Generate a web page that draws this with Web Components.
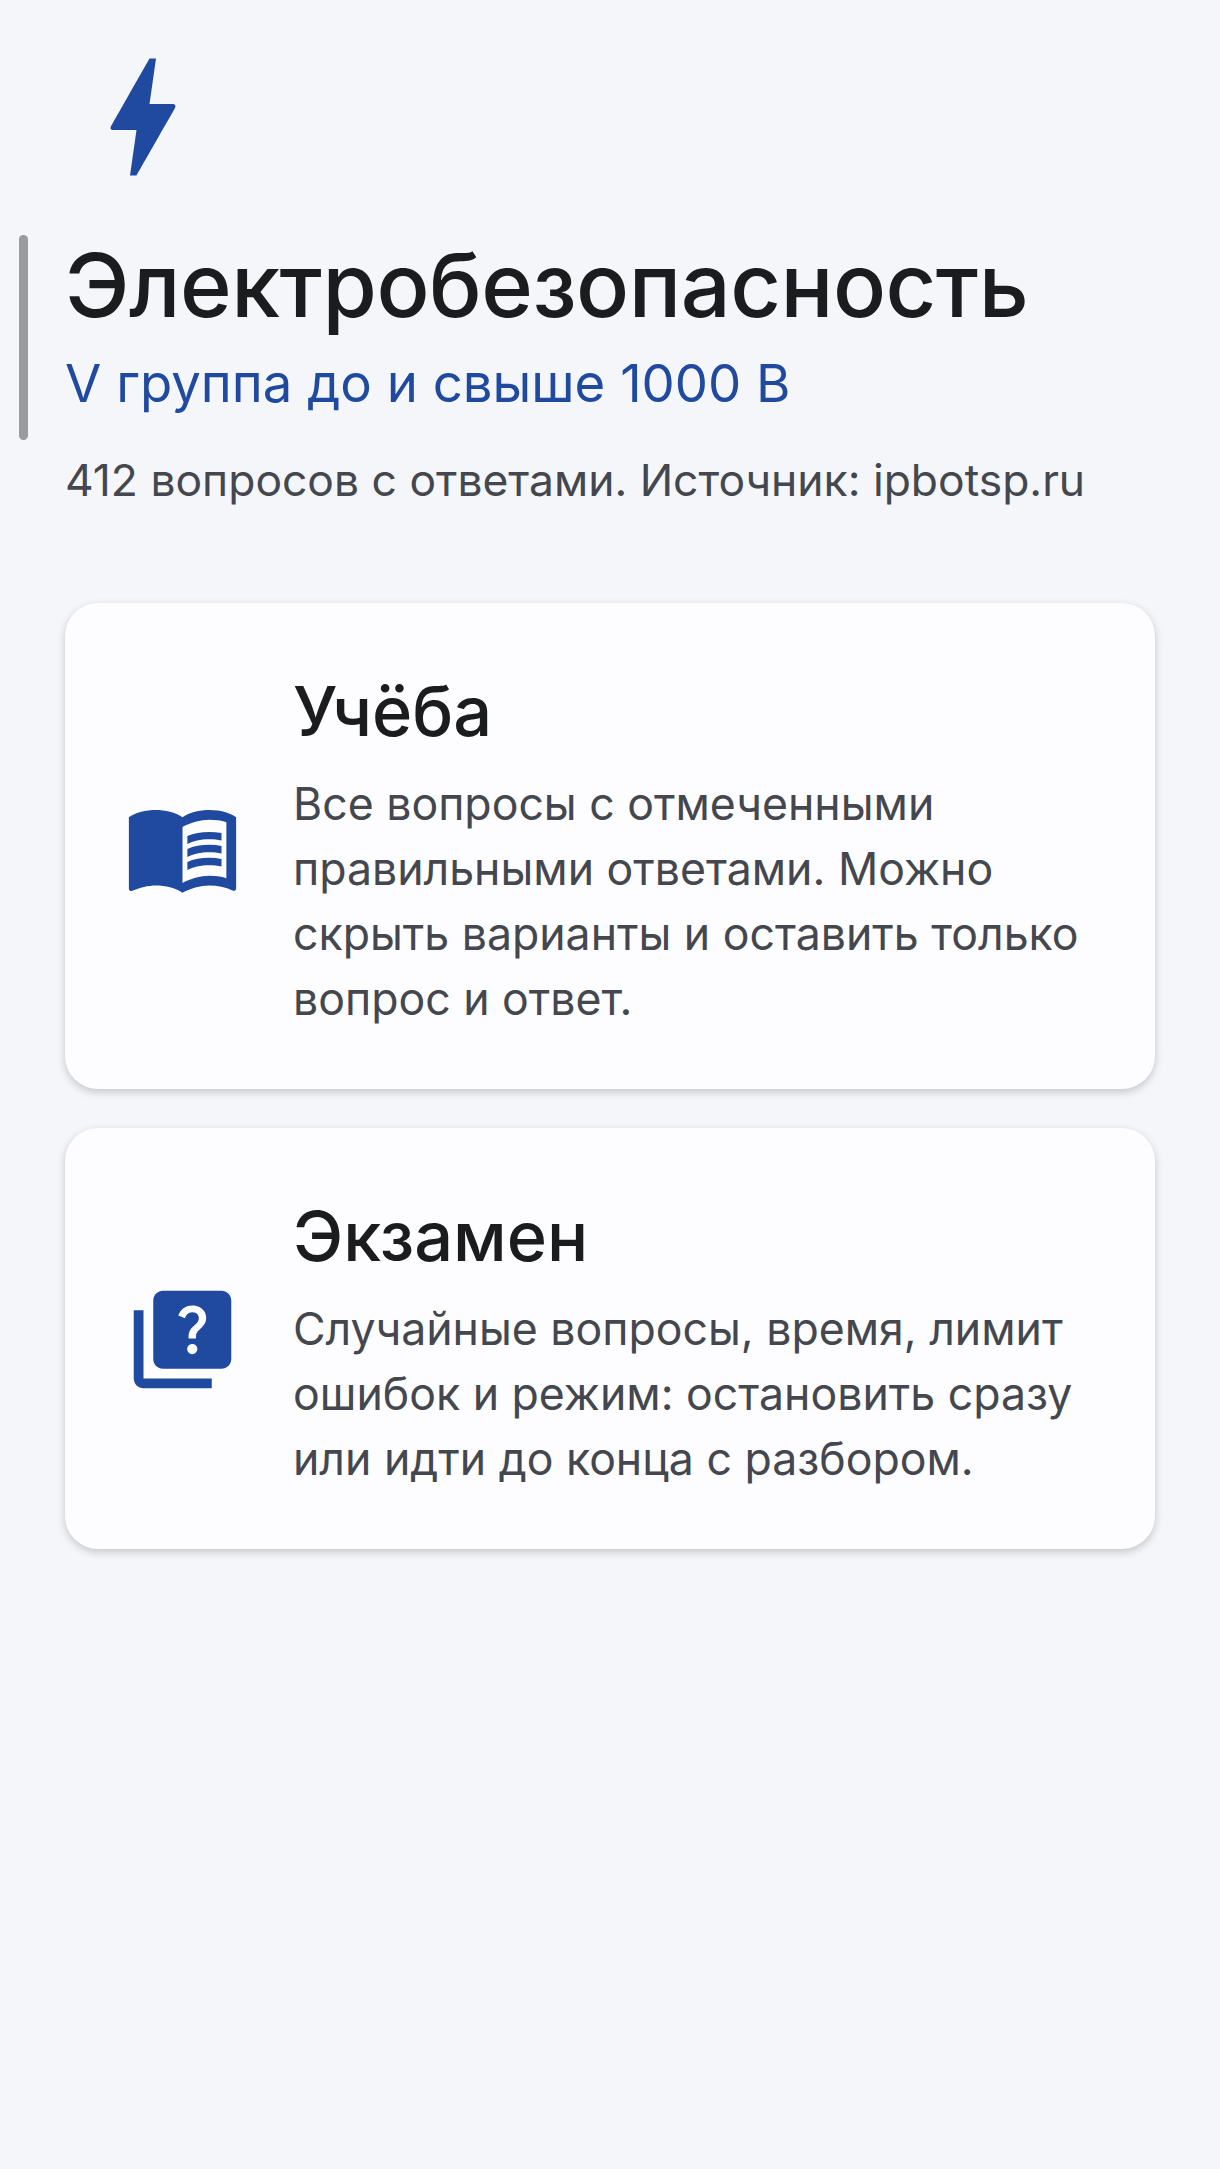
<!DOCTYPE html>
<html lang="ru">
<head>
<meta charset="utf-8">
<title>Электробезопасность</title>
<style>
  html, body { margin: 0; background: #f4f6fa; }
  body { font-family: Inter, "Noto Sans", sans-serif; }
</style>
</head>
<body>
<app-home>
  <app-header title="Электробезопасность" subtitle="V группа до и свыше 1000 В" note="412 вопросов с ответами. Источник: ipbotsp.ru"></app-header>
  <mode-card icon="book" heading="Учёба">Все вопросы с отмеченными правильными ответами. Можно скрыть варианты и оставить только вопрос и ответ.</mode-card>
  <mode-card icon="quiz" heading="Экзамен">Случайные вопросы, время, лимит ошибок и режим: остановить сразу или идти до конца с разбором.</mode-card>
</app-home>
<script>
/* material icons used on the page */
const ICONS = {
  bolt: 'M11 21h-1l1-7H7.5c-.58 0-.57-.32-.38-.66.19-.34.05-.08.07-.12C8.48 10.94 10.42 7.54 13 3h1l-1 7h3.5c.49 0 .56.33.47.51l-.07.15C12.96 17.55 11 21 11 21z',
  book: 'M21 5c-1.11-.35-2.33-.5-3.5-.5-1.95 0-4.05.4-5.5 1.5-1.45-1.1-3.55-1.5-5.5-1.5S2.45 4.9 1 6v14.65c0 .25.25.5.5.5.1 0 .15-.05.25-.05C3.1 20.45 5.05 20 6.5 20c1.95 0 4.05.4 5.5 1.5 1.35-.85 3.8-1.5 5.5-1.5 1.65 0 3.35.3 4.75 1.05.1.05.15.05.25.05.25 0 .5-.25.5-.5V6c-.6-.45-1.25-.75-2-1zm0 13.5c-1.1-.35-2.3-.5-3.5-.5-1.7 0-4.15.65-5.5 1.5V8c1.35-.85 3.8-1.5 5.5-1.5 1.2 0 2.4.15 3.5.5v11.5zM17.5 10.5c.88 0 1.73.09 2.5.26V9.24c-.79-.15-1.64-.24-2.5-.24-1.7 0-3.24.29-4.5.83v1.66c1.13-.64 2.7-.99 4.5-.99zM13 12.49v1.66c1.13-.64 2.7-.99 4.5-.99.88 0 1.73.09 2.5.26V11.9c-.79-.15-1.64-.24-2.5-.24-1.7 0-3.24.3-4.5.83zM17.5 14.33c-1.7 0-3.24.29-4.5.83v1.66c1.13-.64 2.7-.99 4.5-.99.88 0 1.73.09 2.5.26v-1.52c-.79-.16-1.64-.24-2.5-.24z',
  quiz: 'M4 6H2v14c0 1.1.9 2 2 2h14v-2H4V6zm16-4H8c-1.1 0-2 .9-2 2v12c0 1.1.9 2 2 2h12c1.1 0 2-.9 2-2V4c0-1.1-.9-2-2-2zm-5.99 13c-.59 0-1.05-.47-1.05-1.05 0-.59.47-1.04 1.05-1.04.59 0 1.04.45 1.04 1.04-.01.58-.45 1.05-1.04 1.05zm2.5-6.17c-.63.93-1.23 1.21-1.56 1.81-.13.24-.18.4-.18 1.18h-1.52c0-.41-.06-1.08.26-1.65.41-.73 1.18-1.16 1.63-1.8.48-.68.21-1.94-1.14-1.94-.88 0-1.32.67-1.5 1.23l-1.37-.57C11.51 5.96 12.52 5 13.99 5c1.23 0 2.08.56 2.51 1.26.37.61.58 1.73.01 2.57z'
};

class AppIcon extends HTMLElement {
  connectedCallback() {
    const size = this.getAttribute('size') || 24;
    this.attachShadow({ mode: 'open' }).innerHTML = `
      <style>
        :host { display: block; flex: none; width: ${size}px; height: ${size}px; color: #1f4aa0; }
        svg { display: block; width: 100%; height: 100%; fill: currentColor; }
      </style>
      <svg viewBox="0 0 24 24"><path d="${ICONS[this.getAttribute('name')]}"/></svg>`;
  }
}
customElements.define('app-icon', AppIcon);

class AppHeader extends HTMLElement {
  connectedCallback() {
    this.attachShadow({ mode: 'open' }).innerHTML = `
      <style>
        :host { display: block; }
        h1 { margin: 38px 0 13px; font: 550 88px/104px Inter, sans-serif; letter-spacing: -.5px; color: #1a1c1e; }
        h2 { margin: 0; font: 400 52.7px/66px Inter, sans-serif; color: #1f4aa0; }
        p { margin: 34px 0 0; font: 400 44.4px/60px Inter, sans-serif; color: #44474e; }
      </style>
      <app-icon name="bolt" size="156"></app-icon>
      <h1>${this.getAttribute('title')}</h1>
      <h2>${this.getAttribute('subtitle')}</h2>
      <p>${this.getAttribute('note')}</p>`;
  }
}
customElements.define('app-header', AppHeader);

class ModeCard extends HTMLElement {
  connectedCallback() {
    this.attachShadow({ mode: 'open' }).innerHTML = `
      <style>
        :host {
          display: flex; align-items: center; gap: 52px;
          padding: 69px 40px 57px 59px;
          background: #fdfdff; border-radius: 33px;
          box-shadow: 0 3px 9px rgba(0,0,0,.2);
        }
        app-icon { margin-bottom: 11px; }
        .text { min-width: 0; }
        h3 { margin: 0 0 20px; font: 550 68.5px/80px Inter, sans-serif; color: #1a1c1e; }
        p { margin: 0; font: 400 44.6px/65px Inter, sans-serif; color: #44474e; }
      </style>
      <app-icon name="${this.getAttribute('icon')}" size="117"></app-icon>
      <div class="text">
        <h3>${this.getAttribute('heading')}</h3>
        <p><slot></slot></p>
      </div>`;
  }
}
customElements.define('mode-card', ModeCard);

class AppHome extends HTMLElement {
  constructor() {
    super();
    this.attachShadow({ mode: 'open' }).innerHTML = `
      <style>
        :host { display: flex; flex-direction: column; gap: 39px; box-sizing: border-box; min-height: 2169px; padding: 39px 65px; position: relative; }
        .thumb { position: absolute; left: 19px; top: 235px; width: 9px; height: 205px; border-radius: 5px; background: #9a9b9e; }
        ::slotted(app-header) { margin-bottom: 54px; }
      </style>
      <slot></slot>
      <div class="thumb"></div>`;
  }
}
customElements.define('app-home', AppHome);
</script>
</body>
</html>
